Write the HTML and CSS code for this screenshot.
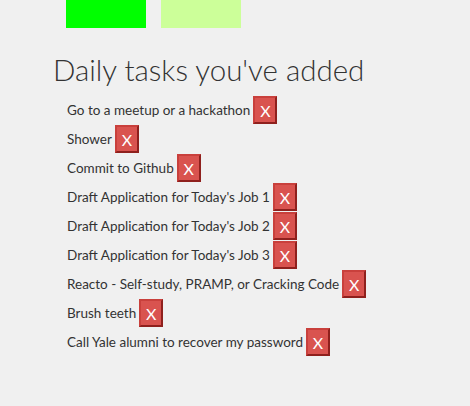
FILE: index.html
```html
<!DOCTYPE html>
<html>
<head>
<meta charset="utf-8">
<link rel="stylesheet" href="styles.css">
</head>
<body>
<div class="swatches">
  <div class="swatch swatch-green"></div>
  <div class="swatch swatch-lime"></div>
</div>
<h1 class="title">Daily tasks you've added</h1>
<ul class="tasks">
  <li class="task"><span class="task-name">Go to a meetup or a hackathon</span><button class="remove">X</button></li>
  <li class="task"><span class="task-name">Shower</span><button class="remove">X</button></li>
  <li class="task"><span class="task-name">Commit to Github</span><button class="remove">X</button></li>
  <li class="task"><span class="task-name">Draft Application for Today's Job 1</span><button class="remove">X</button></li>
  <li class="task"><span class="task-name">Draft Application for Today's Job 2</span><button class="remove">X</button></li>
  <li class="task"><span class="task-name">Draft Application for Today's Job 3</span><button class="remove">X</button></li>
  <li class="task"><span class="task-name">Reacto - Self-study, PRAMP, or Cracking Code</span><button class="remove">X</button></li>
  <li class="task"><span class="task-name">Brush teeth</span><button class="remove">X</button></li>
  <li class="task"><span class="task-name">Call Yale alumni to recover my password</span><button class="remove">X</button></li>
</ul>
</body>
</html>
```

FILE: styles.css
```css
html, body {
  margin: 0;
  padding: 0;
  background: #f0f0f0;
}
body {
  font-family: Lato, "Open Sans", sans-serif;
  color: #333;
}
.swatches {
  display: flex;
  gap: 15px;
  padding-left: 66px;
}
.swatch {
  width: 80px;
  height: 28px;
}
.swatch-green { background: #00ff00; }
.swatch-lime { background: #ccff99; }
.title {
  margin: 24px 0 0 53px;
  font-size: 29.5px;
  font-weight: 300;
  line-height: 36px;
  color: #333;
}
.tasks {
  list-style: none;
  margin: 8px 0 0 0;
  padding: 0 0 0 67px;
  display: flex;
  flex-direction: column;
  gap: 1px;
}
.task {
  display: flex;
  align-items: center;
  gap: 3px;
  font-size: 13.5px;
  height: 28px;
}
.remove {
  width: 24px;
  height: 28px;
  padding: 0;
  background: #d9534f;
  color: #fff;
  font-family: Lato, sans-serif;
  font-size: 16px;
  border-width: 2px;
  border-style: solid;
  border-color: #c9403c #8f201d #8f201d #c9403c;
}
```
